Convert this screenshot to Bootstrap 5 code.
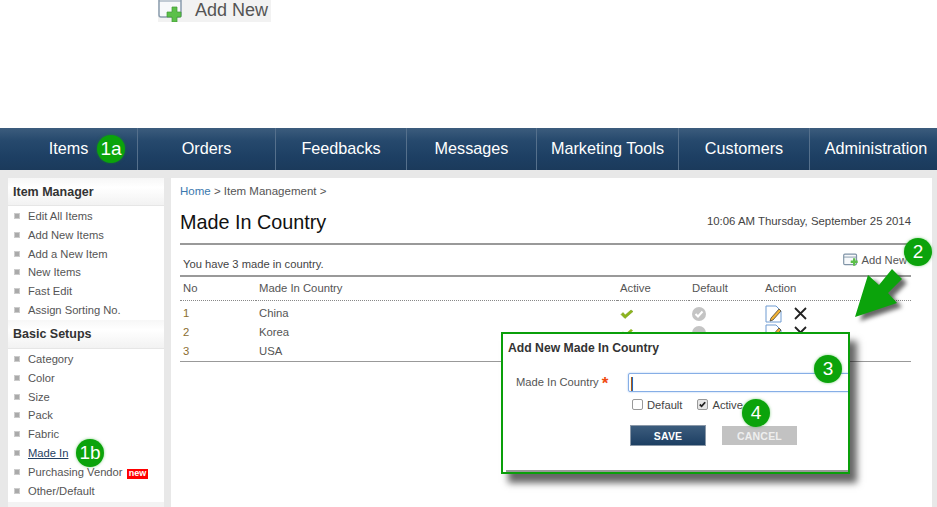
<!DOCTYPE html>
<html lang="en">
<head>
<meta charset="utf-8">
<title>Made In Country</title>
<link href="https://cdn.jsdelivr.net/npm/bootstrap@5.3.0/dist/css/bootstrap.min.css" rel="stylesheet">
<style>
html,body{height:507px;overflow:hidden}
body{position:relative;width:937px;background:#fff;font-family:"Liberation Sans",Arial,sans-serif;font-size:11.2px;color:#444}
.topzone{height:128px}
.chip{margin-left:158px;width:113px;height:22px;background:#f2f2f2;color:#555;font-size:18px;line-height:20px;gap:13px;overflow:hidden}
.chip svg{flex:none}
.mainnav{height:42px;background:linear-gradient(#3c5c7d 0,#26496d 30%,#1d3f63 70%,#1b3a5b 100%)}
.mainnav a{height:42px;line-height:41px;font-size:16.2px;color:#fff;text-decoration:none;text-align:center;border-right:1px solid #55708c;flex:none}
.mainnav a:last-child{border-right:0;flex:1;padding-left:5px;white-space:nowrap}
.w1{width:138px}.w2{width:138px}.w3{width:131px}.w4{width:130px}.w5{width:142px}.w6{width:131px}
.shell{height:337px;background:#e8e8e8;padding:8px 5px 0 8px;gap:7px}
.sidepane{width:156px;flex:none;background:#fff}
.sidehead{font-weight:700;font-size:12.5px;color:#333;padding-left:5px;background:linear-gradient(#f7f7f7,#fff 35%,#f2f2f2);border-bottom:1px solid #e6e6e6}
.hd1{height:28px;line-height:28px}.hd2{height:29px;line-height:28px}
.sidelist{list-style:none;margin:0;padding:1px 0 0}
.sidelist li{height:18.8px;line-height:19px;padding-left:20px;position:relative;color:#555;white-space:nowrap}
.sidelist li::before{content:"";position:absolute;left:6px;top:6px;width:6px;height:6px;background:#aaa;border:1px solid #ccc}
.sidelist a{color:#1f3e62}
.list1{height:114px;padding-top:1px}
.tagnew{background:#f00;color:#fff;font-size:9px;font-weight:700;padding:0 2px 1px;margin-left:1px;line-height:9px;display:inline-block}
.sidefoot{height:6px;background:#f3f3f3;margin-top:2px}
.contentpane{flex:1;background:#fff;padding:0 21px 0 9px}
.crumb{padding-top:7px;height:26px;line-height:13px;color:#555;font-size:11.5px}
.crumb a{color:#3b78ae;text-decoration:none}
.titlerow{height:39px}
.pagetitle{font-size:19.8px;font-weight:400;color:#111;margin:0;line-height:24px;padding-top:6px}
.stamp{font-size:11.4px;color:#444;padding-top:9px}
.rule{height:2px;background:#999}
.summary{height:30px;padding:0 3px}
.summary span{padding-top:9px}
.addlink{gap:3px;color:#555;padding-right:1px}
.addlink span{padding-top:0}
.datatable{width:100%;margin:0;color:#555;border-collapse:collapse;table-layout:fixed;font-size:11.3px;--bs-table-bg:transparent}
.datatable th,.datatable td{padding:0 3px;border:0;font-weight:400;color:#555;background:transparent;box-shadow:none}
.datatable thead th{height:23px;border-bottom:1px dotted #888;vertical-align:middle}
.datatable tbody td{height:19px;vertical-align:middle}
.datatable tbody tr:first-child td{height:23px;padding-top:4px}
.datatable .numcell{color:#8a6d2f}
.datatable tbody tr:last-child td{border-bottom:1px solid #999;height:19px}
.actgap{gap:11px}
.dot{position:absolute;width:28px;height:28px;border-radius:50%;background:#0ba30b;color:#fff;font-size:19px;line-height:28px;text-align:center;box-shadow:0 0 3px rgba(11,163,11,.5);z-index:5}
.d1a{left:97px;top:135px}.d1b{left:76px;top:439px}.d2{left:904px;top:238px}.d3{left:814px;top:355px}.d4{left:742px;top:399px}
.bigarrow{position:absolute;left:845px;top:262px;z-index:4;overflow:visible;filter:drop-shadow(5px 4px 2px rgba(0,0,0,.6))}
.dialogbox{position:absolute;left:501px;top:332px;width:349px;height:142px;background:#fff;border:2px solid #0a9f0a;box-shadow:7px 9px 7px rgba(0,0,0,.6);overflow:hidden;z-index:3}
.dialogtitle{font-weight:700;font-size:12.2px;color:#333;position:absolute;left:5px;top:5px}
.dialogbody{padding:39px 0 0 13px}
.fieldlabel{width:112px;flex:none;color:#555;line-height:19px}
.req{color:#f04a10;font-size:17px;line-height:10px;vertical-align:-3px;font-weight:700}
.textinput{width:240px;flex:none;height:19px;border:1px solid #86aee6;box-shadow:0 0 2px #9cc0f0;padding:0 1px;border-radius:2px;font-size:15px;line-height:17px;font-family:"Liberation Sans",Arial,sans-serif}
.checks{padding-left:116px;margin-top:6px;gap:15px;height:17px;line-height:15px}
.checks .form-check-input{width:11px;height:11px;margin:0 4px 0 0;border-color:#999;border-radius:2px;vertical-align:-1px;float:none}
.checks .form-check-input:checked{background-color:#e6e6e6;border-color:#999;background-image:url("data:image/svg+xml,%3csvg xmlns='http://www.w3.org/2000/svg' viewBox='0 0 20 20'%3e%3cpath fill='none' stroke='%23222' stroke-width='4' d='m4 10 4 4 8-9'/%3e%3c/svg%3e")}
.btnrow{padding-left:114px;margin-top:10px;gap:16px;align-items:center}
.savebtn,.cancelbtn{width:76px;height:21px;padding:0;border-radius:0;font-size:10.5px;font-weight:700;line-height:18px;letter-spacing:.2px}
.savebtn{background:linear-gradient(#3c5c7d,#1d3f63);color:#fff;border:1px solid #8a98a8}
.cancelbtn{background:#c2c2c2;color:#eee;border:1px solid #c2c2c2;width:75px;height:19px}
.dialogline{position:absolute;left:3px;right:0;bottom:0;height:2px;background:#999}
</style>
</head>
<body>
<div class="topzone">
  <div class="chip d-flex">
    <svg width="24" height="22" viewBox="0 0 24 22"><rect x="1" y="-4" width="22" height="21" rx="2" fill="#f7f9fb" stroke="#8a9cad" stroke-width="1.500"/><path d="M1 1h22" stroke="#8a9cad"/><path d="M14 7h5v5h4v5h-4v5h-5v-5h-5v-5h5z" fill="#5cc04a" stroke="#3f9a33" stroke-width=".7"/></svg>
    <span>Add New</span>
  </div>
</div>
<nav class="mainnav d-flex">
  <a class="w1" href="#">Items</a><a class="w2" href="#">Orders</a><a class="w3" href="#">Feedbacks</a><a class="w4" href="#">Messages</a><a class="w5" href="#">Marketing Tools</a><a class="w6" href="#">Customers</a><a href="#">Administration</a>
</nav>
<div class="shell d-flex">
  <aside class="sidepane">
    <div class="sidehead hd1">Item Manager</div>
    <ul class="sidelist list1">
      <li>Edit All Items</li><li>Add New Items</li><li>Add a New Item</li><li>New Items</li><li>Fast Edit</li><li>Assign Sorting No.</li>
    </ul>
    <div class="sidehead hd2">Basic Setups</div>
    <ul class="sidelist">
      <li>Category</li><li>Color</li><li>Size</li><li>Pack</li><li>Fabric</li><li><a href="#">Made In</a></li><li>Purchasing Vendor <span class="tagnew">new</span></li><li>Other/Default</li>
    </ul>
    <div class="sidefoot"></div>
  </aside>
  <main class="contentpane">
    <div class="crumb"><a href="#">Home</a> &gt; Item Management &gt;</div>
    <div class="titlerow d-flex justify-content-between">
      <h1 class="pagetitle">Made In Country</h1>
      <div class="stamp">10:06 AM Thursday, September 25 2014</div>
    </div>
    <div class="rule"></div>
    <div class="summary d-flex justify-content-between align-items-center">
      <span>You have 3 made in country.</span>
      <div class="addlink d-flex align-items-center">
        <svg width="16" height="14" viewBox="0 0 27 24"><rect x="1" y="2" width="22" height="18" rx="2" fill="#f7f9fb" stroke="#7f93a6" stroke-width="2"/><path d="M1 7h22" stroke="#7f93a6" stroke-width="1.500"/><path d="M13 13h4v-4h4v4h4v4h-4v5h-4v-5h-4z" fill="#5cbf4a"/></svg>
        <span>Add New</span>
      </div>
    </div>
    <div class="rule"></div>
    <table class="table datatable">
      <colgroup><col style="width:76px"><col style="width:361px"><col style="width:72px"><col style="width:73px"><col></colgroup>
      <thead><tr><th>No</th><th>Made In Country</th><th>Active</th><th>Default</th><th>Action</th></tr></thead>
      <tbody>
        <tr><td class="numcell">1</td><td>China</td><td><svg width="14" height="11" viewBox="0 0 14 11"><path d="M1 5.500 5 9.500 13 2.500 11 1 5.200 6 3 3.500z" fill="#8db51c" stroke="#6f9412" stroke-width=".5"/></svg></td><td><svg width="14" height="14" viewBox="0 0 14 14"><circle cx="7" cy="7" r="7" fill="#c4c4c4"/><path d="m3.500 7 2.500 2.500 4.500-5" fill="none" stroke="#fff" stroke-width="2"/></svg></td><td><div class="d-flex actgap align-items-center"><svg width="18" height="18" viewBox="0 0 18 18"><path d="M1 1h10l5 5v11H1z" fill="#fff" stroke="#6f9bd1"/><path d="M5 16l1-3 8-9 2 2-8 9z" fill="#f2b233" stroke="#333" stroke-width=".7"/></svg><svg width="13" height="13" viewBox="0 0 13 13"><path d="m1 1 11 11M12 1 1 12" stroke="#222" stroke-width="1.800"/></svg></div></td></tr>
        <tr><td class="numcell">2</td><td>Korea</td><td><svg width="14" height="11" viewBox="0 0 14 11"><path d="M1 5.500 5 9.500 13 2.500 11 1 5.200 6 3 3.500z" fill="#8db51c"/></svg></td><td><svg width="14" height="14" viewBox="0 0 14 14"><circle cx="7" cy="7" r="7" fill="#c4c4c4"/></svg></td><td><div class="d-flex actgap align-items-center"><svg width="18" height="18" viewBox="0 0 18 18"><path d="M1 1h10l5 5v11H1z" fill="#fff" stroke="#6f9bd1"/><path d="M5 16l1-3 8-9 2 2-8 9z" fill="#f2b233" stroke="#333" stroke-width=".7"/></svg><svg width="13" height="13" viewBox="0 0 13 13"><path d="m1 1 11 11M12 1 1 12" stroke="#222" stroke-width="1.800"/></svg></div></td></tr>
        <tr><td class="numcell">3</td><td>USA</td><td></td><td></td><td></td></tr>
      </tbody>
    </table>
  </main>
</div>

<svg class="bigarrow" width="66" height="60" viewBox="0 0 66 60"><path d="M10 55 23 13 34 23 47 7 57 17 43 31 52 41z" fill="#0ba30b"/></svg>

<div class="dot d1a">1a</div>
<div class="dot d1b">1b</div>
<div class="dot d2">2</div>
<div class="dot d3">3</div>
<div class="dot d4">4</div>

<div class="dialogbox">
  <div class="dialogtitle">Add New Made In Country</div>
  <div class="dialogbody">
    <div class="d-flex">
      <label class="fieldlabel" for="mic">Made In Country <span class="req">*</span></label>
      <input id="mic" class="textinput" type="text" value="|">
    </div>
    <div class="checks d-flex">
      <label><input class="form-check-input" type="checkbox">Default</label>
      <label><input class="form-check-input" type="checkbox" checked>Active</label>
    </div>
    <div class="btnrow d-flex">
      <button class="btn savebtn" type="button">SAVE</button>
      <button class="btn cancelbtn" type="button">CANCEL</button>
    </div>
  </div>
  <div class="dialogline"></div>
</div>
</body>
</html>
